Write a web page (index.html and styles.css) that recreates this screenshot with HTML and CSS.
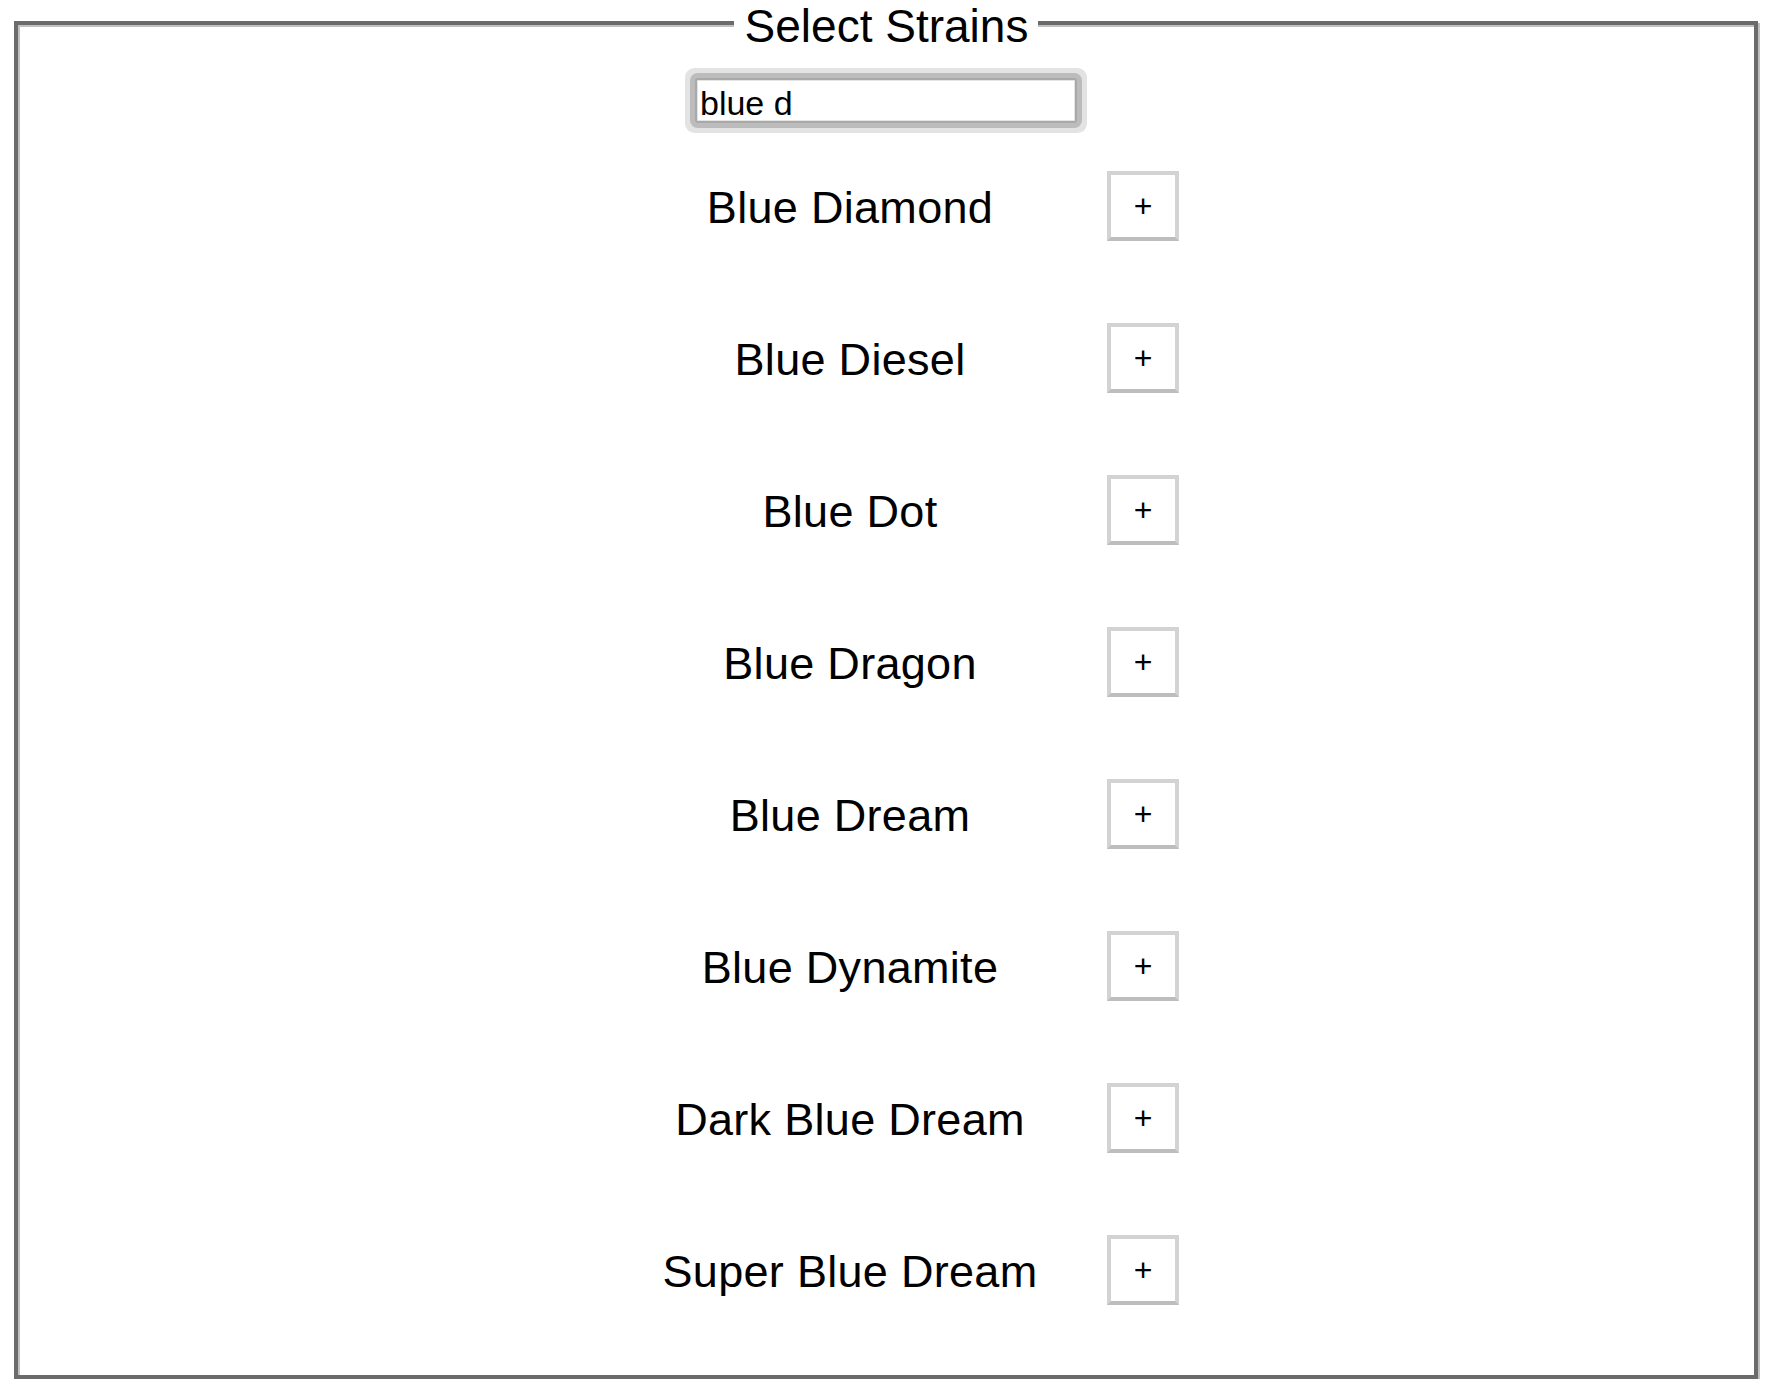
FILE: index.html
```
<!DOCTYPE html>
<html lang="en">
<head>
<meta charset="utf-8">
<title>Select Strains</title>
<link rel="stylesheet" href="styles.css">
</head>
<body>
<fieldset class="picker">
  <legend class="picker-title">Select Strains</legend>
  <input class="search" type="text" value="blue d" autofocus>
  <ul class="strain-list">
    <li class="strain"><span class="strain-name">Blue Diamond</span><button class="add-btn" type="button">+</button></li>
    <li class="strain"><span class="strain-name">Blue Diesel</span><button class="add-btn" type="button">+</button></li>
    <li class="strain"><span class="strain-name">Blue Dot</span><button class="add-btn" type="button">+</button></li>
    <li class="strain"><span class="strain-name">Blue Dragon</span><button class="add-btn" type="button">+</button></li>
    <li class="strain"><span class="strain-name">Blue Dream</span><button class="add-btn" type="button">+</button></li>
    <li class="strain"><span class="strain-name">Blue Dynamite</span><button class="add-btn" type="button">+</button></li>
    <li class="strain"><span class="strain-name">Dark Blue Dream</span><button class="add-btn" type="button">+</button></li>
    <li class="strain"><span class="strain-name">Super Blue Dream</span><button class="add-btn" type="button">+</button></li>
  </ul>
</fieldset>
</body>
</html>
```
FILE: styles.css
```
html, body {
  margin: 0;
  padding: 0;
  background: #ffffff;
}

body {
  font-family: "Liberation Sans", Arial, Helvetica, sans-serif;
  color: #000000;
}

.picker {
  box-sizing: border-box;
  margin: 0 16px 0 14px;
  padding: 0 0 70px 0;
  border: 4px solid #6b6b6b;
  box-shadow: inset 2px 2px 0 #c0c0c0, 2px 2px 0 #c0c0c0;
  min-width: 0;
}

.picker-title {
  margin: 0 auto;
  padding: 7px 10px 0 11px;
  font-size: 46px;
  line-height: 38px;
  background: #ffffff;
  color: #000000;
}

.search {
  display: block;
  box-sizing: border-box;
  width: 382px;
  height: 45px;
  margin: 33px auto 0;
  padding: 6px 1px 0 3px;
  border: 2px solid #a9a9a9;
  border-radius: 3px;
  box-shadow: inset 0 0 0 1px #e4e4e4, 0 0 0 5px #bcbcbc, 0 0 0 10px #e3e3e3;
  outline: none;
  font-family: "Liberation Sans", Arial, Helvetica, sans-serif;
  font-size: 34px;
  color: #000000;
  caret-color: #000000;
  background: #ffffff;
}

.strain-list {
  list-style: none;
  margin: 48px 0 0;
  padding: 0;
  display: flex;
  flex-direction: column;
  gap: 82px;
}

.strain {
  display: flex;
  justify-content: center;
  align-items: center;
  height: 70px;
}

.strain-name {
  width: 514px;
  text-align: center;
  font-size: 45px;
  letter-spacing: 0.3px;
  padding-top: 3px;
}

.add-btn {
  box-sizing: border-box;
  width: 72px;
  height: 70px;
  margin: 0;
  padding: 0;
  border: 4px solid #d3d3d3;
  border-bottom-color: #bdbdbd;
  background: #ffffff;
  font-family: "Liberation Sans", Arial, Helvetica, sans-serif;
  font-size: 32px;
  color: #000000;
  display: flex;
  align-items: center;
  justify-content: center;
}
```
